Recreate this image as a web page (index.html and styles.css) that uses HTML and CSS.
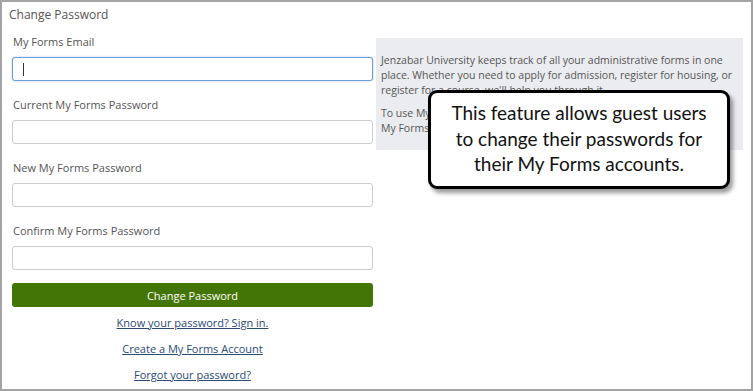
FILE: index.html
```html
<!DOCTYPE html>
<html lang="en">
<head>
    <meta charset="UTF-8">
    <meta name="viewport" content="width=device-width, initial-scale=1.0">
    <title>Change Password</title>
    <link rel="stylesheet" href="styles.css">
</head>
<body>
    <div class="frame">
        <h1 class="frame-title">Change Password</h1>

        <div class="layout">
            <form class="pw-form" id="pwForm">
                <div class="field">
                    <label for="email">My Forms Email</label>
                    <input type="text" id="email" class="is-focused">
                </div>
                <div class="field">
                    <label for="currentPw">Current My Forms Password</label>
                    <input type="password" id="currentPw">
                </div>
                <div class="field">
                    <label for="newPw">New My Forms Password</label>
                    <input type="password" id="newPw">
                </div>
                <div class="field">
                    <label for="confirmPw">Confirm My Forms Password</label>
                    <input type="password" id="confirmPw">
                </div>
                <button type="submit" class="submit-button">Change Password</button>
                <div class="links">
                    <a href="#">Know your password? Sign in.</a>
                    <a href="#">Create a My Forms Account</a>
                    <a href="#">Forgot your password?</a>
                </div>
            </form>

            <div class="info-panel">
                <p>Jenzabar University keeps track of all your administrative forms in one place. Whether you need to apply for admission, register for housing, or register for a course, we'll help you through it.</p>
                <p>To use My Forms, first create an account, or sign in with your existing<br>My Forms email and password to view and track all of your forms.</p>
            </div>
        </div>

        <div class="callout">This feature allows guest users to change their passwords for their My Forms accounts.</div>
    </div>
</body>
</html>
```

FILE: styles.css
```css
* {
    box-sizing: border-box;
}

body {
    margin: 0;
    padding: 0;
    font-family: 'Open Sans', sans-serif;
    color: #555;
    background: #fff;
}

.frame {
    position: relative;
    width: 753px;
    height: 391px;
    border: 2px solid #a3a3a3;
    padding: 5px 10px 0 10px;
}

.frame-title {
    margin: 0 0 0 -3px;
    font-size: 12px;
    font-weight: normal;
    line-height: 16px;
    color: #555;
}

.layout {
    display: grid;
    grid-template-columns: 361px 367px;
    column-gap: 3px;
    margin-top: 10px;
    align-items: start;
}

.field {
    margin-bottom: 15px;
}

.field label {
    display: block;
    font-size: 11px;
    line-height: 17px;
    margin: 0 0 7px 1px;
}

.field input {
    display: block;
    width: 100%;
    height: 24px;
    border: 1px solid #cccccc;
    border-radius: 3px;
    padding: 0 8px;
    font-family: inherit;
    font-size: 12px;
    outline: none;
}

/* focused field with its text caret */
.field input.is-focused {
    border-color: #6a9fdb;
    box-shadow: 0 0 2px rgba(90, 150, 225, 0.6);
    background-image: linear-gradient(#333, #333);
    background-size: 1px 13px;
    background-position: 10px 5px;
    background-repeat: no-repeat;
}

.submit-button {
    display: block;
    width: 100%;
    height: 24px;
    margin-top: -2px;
    border: none;
    border-radius: 3px;
    background-color: #437506;
    color: #fff;
    font-family: inherit;
    font-size: 11px;
    cursor: pointer;
}

.links {
    display: flex;
    flex-direction: column;
    align-items: center;
    margin-top: 3px;
}

.links a {
    font-size: 11px;
    line-height: 26px;
    color: #2b4a75;
    text-decoration: underline;
}

.info-panel {
    margin-top: 5px;
    padding: 15px 8px 14px 5px;
    background-color: #ebecf0;
    font-size: 10.5px;
    line-height: 15px;
}

.info-panel p {
    margin: 0 0 8px 0;
}

.info-panel p:last-child {
    margin-bottom: 0;
}

/* annotation bubble laid over the page */
.callout {
    position: absolute;
    left: 426px;
    top: 88px;
    width: 302px;
    height: 99px;
    padding: 7px 18px 0 18px;
    background: #fff;
    border: 3px solid #000;
    border-radius: 9px;
    box-shadow: 3px 4px 4px rgba(0, 0, 0, 0.4);
    font-family: 'Lato', sans-serif;
    font-size: 19px;
    line-height: 25.5px;
    color: #111;
    text-align: center;
}
```
